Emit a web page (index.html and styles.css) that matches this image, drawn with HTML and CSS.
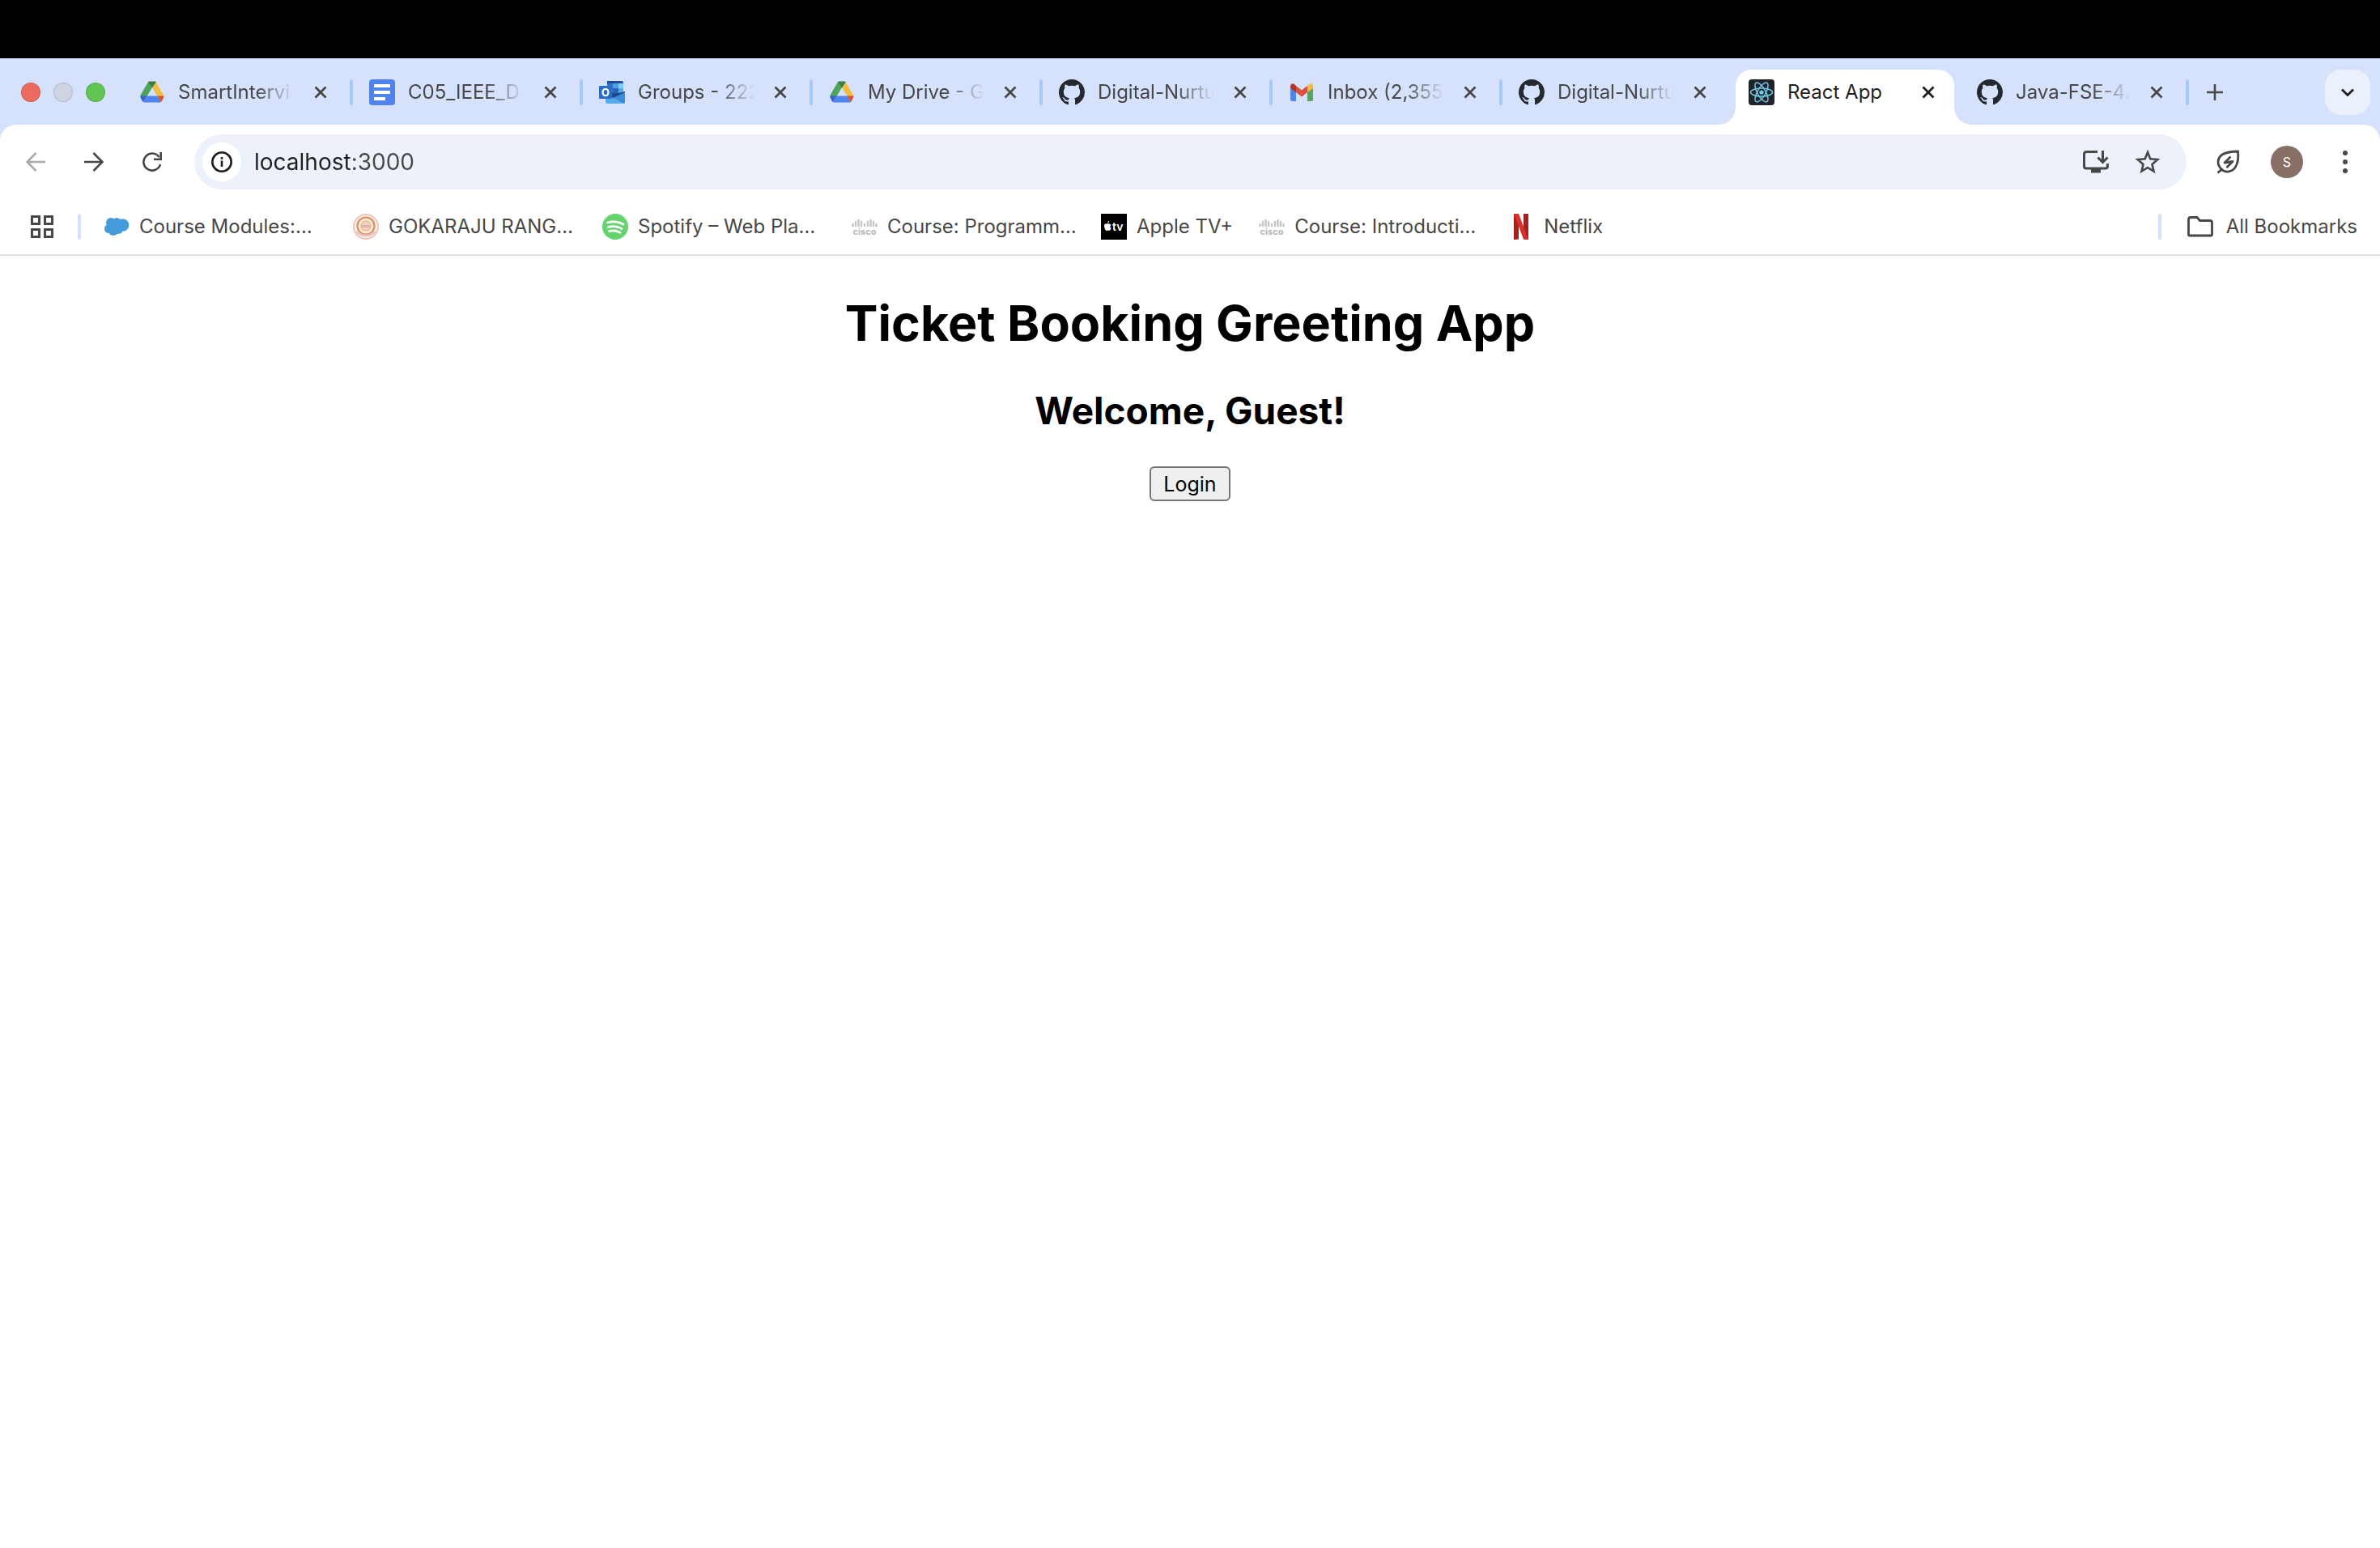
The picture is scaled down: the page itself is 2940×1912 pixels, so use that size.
FILE: index.html
```html
<!DOCTYPE html>
<html lang="en">
<head>
  <meta charset="utf-8">
  <title>React App</title>
  <link rel="stylesheet" href="styles.css">
</head>
<body>
  <svg class="sprite" aria-hidden="true">
    <symbol id="drive" viewBox="0 0 32 32">
      <path fill="#4fa35a" d="M11 3.200L1.500 19.500a2 2 0 0 0 0 1.500H9.500L16 10 12 3.200z"/>
      <path fill="#f3bd42" d="M20.500 3.200L30 19.500a2 2 0 0 1 .3 1.500H22.500L16 10 20 3.200z"/>
      <path fill="#397d40" d="M11 3.200Q11.800 2.500 12.800 2.500H19.200Q20.200 2.500 20.800 3.200L16 10.500z"/>
      <path fill="#3563cf" d="M1.300 20.500H9.600L5.200 28Q4.200 27.800 3.600 26.800L1.600 22.500z"/>
      <path fill="#5084ed" d="M9.600 20.500H22.400L26.800 28Q26 28.500 25 28.500H7Q6 28.500 5.200 28z"/>
      <path fill="#dc5035" d="M22.400 20.500H30.500Q30.500 22 29.800 23L28 26.800Q27.500 27.700 26.800 28z"/>
    </symbol>
    <symbol id="github" viewBox="0 0 16 16">
      <path fill="#24292f" d="M8 0C3.580 0 0 3.580 0 8c0 3.540 2.290 6.530 5.470 7.590.4.070.55-.17.55-.38 0-.19-.01-.82-.01-1.490-2.010.37-2.530-.49-2.690-.94-.09-.23-.48-.94-.82-1.130-.28-.15-.68-.52-.01-.53.63-.01 1.080.58 1.230.82.72 1.210 1.870.87 2.330.66.070-.52.28-.87.51-1.070-1.780-.2-3.640-.89-3.640-3.950 0-.87.31-1.590.82-2.150-.08-.2-.36-1.020.08-2.120 0 0 .67-.21 2.200.82.64-.18 1.320-.27 2-.27s1.360.09 2 .27c1.530-1.040 2.200-.82 2.200-.82.44 1.100.16 1.920.08 2.120.51.56.82 1.270.82 2.150 0 3.070-1.870 3.750-3.650 3.950.29.25.54.73.54 1.480 0 1.070-.01 1.930-.01 2.200 0 .21.15.46.55.38A8.010 8.010 0 0 0 16 8c0-4.420-3.580-8-8-8z"/>
    </symbol>
    <symbol id="close" viewBox="0 0 16 16">
      <path d="M1.500 1.500l13 13m0-13l-13 13" fill="none" stroke="currentColor" stroke-width="2.800"/>
    </symbol>
    <symbol id="cisco-bars" viewBox="0 0 32 32">
      <path d="M1.500 13v2M5 10v5M8.500 8v7M12 10v5M16 13v2M20 10v5M23.500 8v7M27 10v5M30.500 13v2" fill="none" stroke="#c4c5c8" stroke-width="2.400" stroke-linecap="round"/>
    </symbol>
  </svg>

  <div class="notch-bar"></div>

  <header class="browser">
    <nav class="tab-strip" aria-label="Tabs">
      <div class="lights">
        <span class="light light-red"></span>
        <span class="light light-gray"></span>
        <span class="light light-green"></span>
      </div>
      <div class="tab">
        <svg class="icon"><use href="#drive"/></svg>
        <a class="tab-title" href="#">SmartIntervi</a>
        <button class="close" aria-label="Close tab"><svg><use href="#close"/></svg></button>
      </div>
      <div class="tab">
        <svg class="icon" viewBox="0 0 32 32"><rect width="32" height="32" rx="4" fill="#5083ec"/><path d="M6 8h20M6 16h20M6 24h14" stroke="#fff" stroke-width="4"/></svg>
        <a class="tab-title" href="#">C05_IEEE_D</a>
        <button class="close" aria-label="Close tab"><svg><use href="#close"/></svg></button>
      </div>
      <div class="tab">
        <svg class="icon" viewBox="0 0 32 32">
          <path fill="#1f4e96" d="M10 2h18q2 0 2 2v3H10z"/>
          <path fill="#2f74c9" d="M10 5h7v12h-7z"/><path fill="#4d9fe8" d="M17 5h7v6h-7z"/><path fill="#7ccbf8" d="M24 5h6v6h-6z"/>
          <path fill="#2a66b8" d="M17 11h7v6h-7z"/><path fill="#56a9ea" d="M24 11h6v8h-6z"/>
          <path fill="#1d4889" d="M10 17h14l8-2v4L20 24 10 20z"/>
          <path fill="#57aaeb" d="M8 18l22 12H10q-2 0-2-2z"/><path fill="#3f8dd9" d="M32 16v12q0 2-2 2L17 23z"/>
          <rect y="8" width="16" height="16" rx="1" fill="#2b6cc6"/>
          <ellipse cx="8" cy="16" rx="3.500" ry="4.200" fill="none" stroke="#fff" stroke-width="2.200"/>
        </svg>
        <a class="tab-title" href="#">Groups - 222</a>
        <button class="close" aria-label="Close tab"><svg><use href="#close"/></svg></button>
      </div>
      <div class="tab">
        <svg class="icon"><use href="#drive"/></svg>
        <a class="tab-title" href="#">My Drive - G</a>
        <button class="close" aria-label="Close tab"><svg><use href="#close"/></svg></button>
      </div>
      <div class="tab">
        <svg class="icon"><use href="#github"/></svg>
        <a class="tab-title" href="#">Digital-Nurtu</a>
        <button class="close" aria-label="Close tab"><svg><use href="#close"/></svg></button>
      </div>
      <div class="tab">
        <svg class="icon" viewBox="0 0 32 32">
          <path fill="#5084ed" d="M2 10l7 5v12H4q-2 0-2-2z"/>
          <path fill="#58a55c" d="M23 15l7-5v15q0 2-2 2h-5z"/>
          <path fill="#f3bd42" d="M23 8l2-2q2-1.500 4 0 1 1 1 3v2l-7 5z"/>
          <path fill="#dc4f3f" d="M9 8l7 5.500L23 8v8l-7 5.500L9 16z"/>
          <path fill="#b3322a" d="M9 8L7 6Q5 4.500 3 6 2 7 2 9v2l7 5z"/>
        </svg>
        <a class="tab-title" href="#">Inbox (2,355</a>
        <button class="close" aria-label="Close tab"><svg><use href="#close"/></svg></button>
      </div>
      <div class="tab tab-before-active">
        <svg class="icon"><use href="#github"/></svg>
        <a class="tab-title" href="#">Digital-Nurtu</a>
        <button class="close" aria-label="Close tab"><svg><use href="#close"/></svg></button>
      </div>
      <div class="tab tab-active">
        <svg class="icon" viewBox="0 0 32 32">
          <rect width="32" height="32" rx="4" fill="#20232a"/>
          <g fill="none" stroke="#71cbe8" stroke-width="1.500">
            <ellipse cx="16" cy="16" rx="13.500" ry="5"/>
            <ellipse cx="16" cy="16" rx="13.500" ry="5" transform="rotate(60 16 16)"/>
            <ellipse cx="16" cy="16" rx="13.500" ry="5" transform="rotate(120 16 16)"/>
          </g>
          <circle cx="16" cy="16" r="2.600" fill="#71cbe8"/>
        </svg>
        <a class="tab-title" href="#" aria-current="page">React App</a>
        <button class="close" aria-label="Close tab"><svg><use href="#close"/></svg></button>
      </div>
      <div class="tab">
        <svg class="icon"><use href="#github"/></svg>
        <a class="tab-title" href="#">Java-FSE-4.</a>
        <button class="close" aria-label="Close tab"><svg><use href="#close"/></svg></button>
      </div>
      <button class="new-tab" aria-label="New tab"><svg viewBox="0 0 20 20"><path d="M10 0v20M0 10h20" stroke="currentColor" stroke-width="2.600"/></svg></button>
      <button class="tab-search" aria-label="Search tabs"><svg viewBox="0 0 16 10"><path d="M1 1.500l7 7 7-7" fill="none" stroke="currentColor" stroke-width="2.800"/></svg></button>
    </nav>

    <div class="toolbar">
      <button class="tool tool-off" aria-label="Back"><svg viewBox="0 0 24 24"><path d="M24 12H2M12.500 1L1.500 12l11 11" fill="none" stroke="currentColor" stroke-width="2.600"/></svg></button>
      <button class="tool" aria-label="Forward"><svg viewBox="0 0 24 24"><path d="M0 12h22M11.500 1l11 11-11 11" fill="none" stroke="currentColor" stroke-width="2.600"/></svg></button>
      <button class="tool" aria-label="Reload"><svg viewBox="0 0 24 24"><path d="M20.500 6A10.500 10.500 0 1 0 22 15M22.700 0v8.700H14" fill="none" stroke="currentColor" stroke-width="2.600"/></svg></button>
      <div class="omnibox">
        <button class="site-info" aria-label="Site information"><svg viewBox="0 0 26 26"><circle cx="13" cy="13" r="11.700" fill="none" stroke="currentColor" stroke-width="2.600"/><path d="M13 11.500v7.500M13 7v2.800" stroke="currentColor" stroke-width="2.600"/></svg></button>
        <input class="address" type="text" value="localhost:3000" aria-label="Address">
        <button class="omni-action" aria-label="Install app"><svg viewBox="0 0 32 32"><path d="M18 3.500H4.500Q1.500 3.500 1.500 6.500v15q0 2.500 3 2.500h23q3 0 3-3v-3M24.500 2v14M18.500 10.500l6 6 6-6" fill="none" stroke="currentColor" stroke-width="3"/><path d="M10 24h12v5.500H10z" fill="currentColor"/></svg></button>
        <button class="omni-action" aria-label="Bookmark this page"><svg viewBox="0 0 32 32"><path d="M16 4l3.300 8.200 9 .8-6.800 5.900 2 8.700L16 23l-7.500 4.600 2-8.700L3.700 13l9-.8z" fill="none" stroke="currentColor" stroke-width="2.600"/></svg></button>
      </div>
      <button class="tool tool-leaf" aria-label="Energy saver"><svg viewBox="0 0 32 32"><path d="M2.500 29.500l5-4.500C1 20 2 11 8 7c6-3.500 12-4 19.500-4 .8 7 .5 14-3.500 20-4 5.500-12 7-17 2" fill="none" stroke="currentColor" stroke-width="2.800"/><path d="M18.500 9.500l-7.500 7.500 10-1.500-7.500 7.500" fill="none" stroke="currentColor" stroke-width="2.800" stroke-linejoin="round"/></svg></button>
      <button class="avatar" aria-label="Profile">S</button>
      <button class="tool tool-menu" aria-label="Menu"><svg viewBox="0 0 8 30"><g fill="currentColor"><circle cx="4" cy="4" r="3"/><circle cx="4" cy="15" r="3"/><circle cx="4" cy="26" r="3"/></g></svg></button>
    </div>

    <nav class="bookmarks" aria-label="Bookmarks">
      <button class="apps" aria-label="Apps"><svg viewBox="0 0 28 28"><g fill="none" stroke="currentColor" stroke-width="3"><path d="M1.500 1.500h9v9h-9zM17.500 1.500h9v9h-9zM1.500 17.500h9v9h-9zM17.500 17.500h9v9h-9z"/></g></svg></button>
      <a class="bookmark bookmark-long" href="#"><svg class="icon" viewBox="0 0 32 32"><g fill="#449bda"><circle cx="9" cy="11" r="6"/><circle cx="16" cy="10.500" r="5.500"/><circle cx="23.500" cy="14" r="7.800"/><circle cx="6.500" cy="18.500" r="5.500"/><circle cx="12" cy="21" r="6"/><circle cx="18" cy="19" r="6"/></g></svg>Course Modules:…</a>
      <a class="bookmark bookmark-long" href="#"><svg class="icon" viewBox="0 0 32 32"><circle cx="16" cy="16" r="15" fill="#fbf3ea" stroke="#ecc5be" stroke-width="2"/><circle cx="16" cy="15" r="10.500" fill="#faedd8" stroke="#d98e66" stroke-width="2.200"/><circle cx="16" cy="15" r="6" fill="#f1d3c4" stroke="#edc08e" stroke-width="1.600"/><path d="M10 14h12v3H10z" fill="#e5b2b2"/><path d="M4 22q12 10 24 0" fill="none" stroke="#e9c0c4" stroke-width="2.500"/></svg>GOKARAJU RANG…</a>
      <a class="bookmark bookmark-long" href="#"><svg class="icon" viewBox="0 0 32 32"><circle cx="16" cy="16" r="16" fill="#65d36e"/><path d="M6.500 11q10-3 19.500 2M7.500 16.500q8.500-2.500 16.500 2M8.500 21.500q7-1.800 13.500 1.800" fill="none" stroke="#fff" stroke-width="2.800" stroke-linecap="round"/></svg>Spotify – Web Pla…</a>
      <a class="bookmark bookmark-long" href="#"><svg class="icon" viewBox="0 0 32 32"><use href="#cisco-bars"/><text class="cisco-name" x="16" y="26">cisco</text></svg>Course: Programm…</a>
      <a class="bookmark" href="#"><svg class="icon" viewBox="0 0 32 32"><path d="M0 0h32v32H0z"/><path fill="#fff" d="M10.500 12.500q-1.500-.8-2.300-.3-1 .5-1.900 0Q4 12 4 15.500q.3 3.500 2.600 5.500 1 0 1.700-.3t1.700.3q1.600 0 2.700-3-2.400-1.500-.2-4.300-.7-1-2-1.200zM8 11.500q0-2.200 2.200-2.800.2 2.300-2.200 2.800z"/><text x="14" y="21" font-size="14" font-weight="600" fill="#fff">tv</text></svg>Apple TV+</a>
      <a class="bookmark bookmark-long" href="#"><svg class="icon" viewBox="0 0 32 32"><use href="#cisco-bars"/><text class="cisco-name" x="16" y="26">cisco</text></svg>Course: Introducti…</a>
      <a class="bookmark" href="#"><svg class="icon" viewBox="0 0 32 32"><path fill="#a3221e" d="M7 0h6v31.500L7 32zM19 0h6v32l-6-.5z"/><path fill="#d8322a" d="M7 0h6l12 32-6-.6z"/></svg>Netflix</a>
      <a class="bookmark all-bookmarks" href="#"><svg class="icon" viewBox="0 0 32 32"><path d="M1.500 7q0-2.500 2.500-2.500h8l3.500 4H28q2.500 0 2.500 2.500v14.500q0 1.500-1.500 1.500H3q-1.500 0-1.500-1.500z" fill="none" stroke="currentColor" stroke-width="2.800"/></svg>All Bookmarks</a>
    </nav>
  </header>

  <main class="page">
    <h1>Ticket Booking Greeting App</h1>
    <h2>Welcome, Guest!</h2>
    <button class="login">Login</button>
  </main>
</body>
</html>
```
FILE: styles.css
```css
:root {
  --strip: #d6e1fb;
  --field: #edf2fa;
  --ink: #1f1f1f;
  --muted: #474747;
}

* {
  box-sizing: border-box;
}

body {
  margin: 0;
  background: #fff;
  color: #000;
  font-family: Inter, "Liberation Sans", sans-serif;
}

button {
  flex: none;
  display: flex;
  align-items: center;
  justify-content: center;
  margin: 0;
  padding: 0;
  border: 0;
  background: none;
  color: inherit;
  font: inherit;
}

a {
  color: inherit;
  text-decoration: none;
}

svg {
  display: block;
  flex: none;
}

.sprite {
  position: absolute;
  width: 0;
  height: 0;
}

.icon {
  width: 32px;
  height: 32px;
}

.cisco-name {
  fill: #b4b6ba;
  font-size: 11px;
  font-weight: 700;
  text-anchor: middle;
}

.notch-bar {
  height: 72px;
  background: #000;
}

.browser {
  background: var(--strip);
  color: var(--muted);
  font-size: 24px;
  line-height: 32px;
}

/* Tab strip */
.tab-strip {
  display: flex;
  align-items: center;
  height: 82px;
  padding: 2px 12px 0 26px;
}

.lights {
  display: flex;
  gap: 16px;
  margin-right: 22px;
}

.light {
  width: 24px;
  height: 24px;
  border: 1px solid #0002;
  border-radius: 50%;
}

.light-red {
  background: #ed6a5e;
}

.light-gray {
  background: #ced4e2;
}

.light-green {
  background: #61c554;
}

.tab {
  display: flex;
  align-items: center;
  flex: 0 1 284px;
  min-width: 0;
  padding-left: 20px;
}

.tab::after {
  content: "";
  flex: none;
  width: 4px;
  height: 32px;
  margin-left: 28px;
  border-radius: 2px;
  background: #a8c7fa;
}

.tab-before-active::after {
  background: none;
}

.tab-title {
  flex: 1 1 0;
  min-width: 0;
  margin: 0 24px 0 16px;
  overflow: hidden;
  white-space: nowrap;
  -webkit-mask-image: linear-gradient(to left, transparent, #000 48px);
  mask-image: linear-gradient(to left, transparent, #000 48px);
}

.close,
.close svg {
  width: 16px;
  height: 16px;
}

.tab-active {
  position: relative;
  align-self: flex-end;
  flex-basis: 270px;
  height: 68px;
  margin: 0 6px 0 4px;
  padding: 0 24px 12px 16px;
  border-radius: 20px 20px 0 0;
  background: #fff;
  color: var(--ink);
}

.tab-active .tab-title {
  -webkit-mask-image: none;
  mask-image: none;
}

/* Flared feet of the selected tab */
.tab-active::before,
.tab-active::after {
  content: "";
  position: absolute;
  bottom: 0;
  width: 20px;
  height: 20px;
  margin: 0;
  border-radius: 0;
}

.tab-active::before {
  right: 100%;
  background: radial-gradient(circle at 0 0, transparent 19px, #fff 20px);
}

.tab-active::after {
  left: 100%;
  background: radial-gradient(circle at 100% 0, transparent 19px, #fff 20px);
}

.tab-active + .tab {
  padding-left: 22px;
}

.new-tab {
  width: 64px;
  height: 40px;
}

.new-tab svg {
  width: 20px;
  height: 20px;
}

.tab-search {
  width: 56px;
  height: 56px;
  margin-left: auto;
  border-radius: 20px;
  background: #ebf1fc;
  color: var(--ink);
}

.tab-search svg {
  width: 16px;
  height: 10px;
}

/* Toolbar */
.toolbar {
  display: flex;
  align-items: center;
  height: 92px;
  padding: 0 30px 0 32px;
  border-radius: 20px 20px 0 0;
  background: #fff;
}

.tool {
  width: 24px;
  height: 24px;
  margin-right: 48px;
}

.tool svg {
  width: 24px;
  height: 24px;
}

.tool-off {
  color: #a9a9a9;
}

.omnibox {
  display: flex;
  align-items: center;
  flex: 1;
  height: 68px;
  margin-right: 36px;
  margin-left: -8px;
  padding: 0 32px 0 10px;
  border-radius: 34px;
  background: var(--field);
}

.site-info {
  width: 48px;
  height: 48px;
  border-radius: 50%;
  background: #fff;
  color: var(--ink);
}

.site-info svg {
  width: 26px;
  height: 26px;
}

.address {
  flex: 1;
  min-width: 0;
  height: 48px;
  margin: 0;
  padding: 0 0 0 16px;
  border: 0;
  outline: 0;
  background: linear-gradient(to right, var(--ink) 134px, var(--muted) 134px);
  -webkit-background-clip: text;
  background-clip: text;
  -webkit-text-fill-color: transparent;
  font: 28px/48px Inter, "Liberation Sans", sans-serif;
}

.omni-action {
  width: 32px;
  height: 32px;
  margin-left: 32px;
}

.omni-action svg {
  width: 32px;
  height: 32px;
}

.tool-leaf {
  width: 32px;
  height: 32px;
  margin-right: 36px;
}

.tool-leaf svg {
  width: 32px;
  height: 32px;
}

.avatar {
  width: 40px;
  height: 40px;
  border-radius: 50%;
  background: #886f65;
  color: #fff;
  font-size: 16px;
}

.tool-menu {
  width: 8px;
  height: 30px;
  margin: 0 9px 0 48px;
}

.tool-menu svg {
  width: 8px;
  height: 30px;
}

/* Bookmarks bar */
.bookmarks {
  display: flex;
  align-items: center;
  height: 70px;
  padding: 0 28px 0 38px;
  border-bottom: 2px solid #e1e1e1;
  background: #fff;
}

.apps {
  width: 62px;
  height: 32px;
  margin-right: 28px;
}

.apps svg {
  width: 28px;
  height: 28px;
}

.apps::after,
.all-bookmarks::before {
  content: "";
  flex: none;
  width: 4px;
  height: 32px;
  border-radius: 2px;
  background: #d3e3fd;
}

.apps::after {
  margin-left: 30px;
}

.bookmark {
  display: flex;
  align-items: center;
  flex: none;
  gap: 12px;
  margin-right: 32px;
  white-space: nowrap;
}

.bookmark-long {
  width: 276px;
}

.all-bookmarks {
  gap: 16px;
  margin: 0 0 0 auto;
}

.all-bookmarks::before {
  margin-right: 16px;
}

/* Page content */
.page {
  display: flex;
  flex-direction: column;
  align-items: center;
  padding: 44px 16px;
}

h1,
h2 {
  margin: 0 0 40px;
  font-weight: 700;
  text-align: center;
}

h1 {
  font-size: 61px;
  line-height: 78px;
}

h2 {
  font-size: 46px;
  line-height: 58px;
}

.login {
  height: 43px;
  padding: 0 15px;
  border: 2px solid #767676;
  border-radius: 6px;
  background: #efefef;
  font-size: 25px;
}
```
